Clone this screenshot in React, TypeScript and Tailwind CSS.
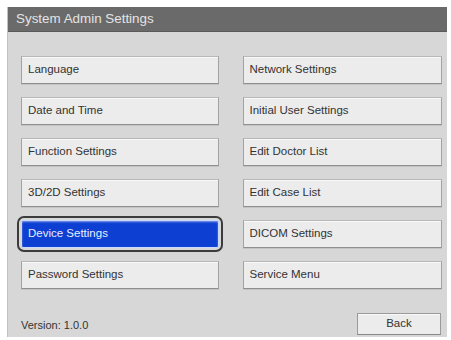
import React from 'react';

const leftItems = ['Language', 'Date and Time', 'Function Settings', '3D/2D Settings', 'Device Settings', 'Password Settings'];
const rightItems = ['Network Settings', 'Initial User Settings', 'Edit Doctor List', 'Edit Case List', 'DICOM Settings', 'Service Menu'];

const MenuButton = ({ label, selected }: { label: string; selected?: boolean }) => {
  if (selected) {
    return (
      <div className="h-[28px] rounded-[3px] outline-2 outline-offset-[2px] outline-[#3c3c3c]">
        <button className="h-full w-full flex items-center pl-[6px] bg-[#0c3fd2] border border-[#c9d8ff] rounded-[2px] text-[11.5px] text-[#e8eeff] shadow-[inset_0_1px_2px_rgba(255,255,255,0.5)]">
          {label}
        </button>
      </div>
    );
  }
  return (
    <button className="h-[28px] w-full flex items-center pl-[6px] bg-[#ececec] border border-[#a3a3a3] border-t-[#b8b8b8] border-b-[#8f8f8f] text-[11.5px] text-[#333] shadow-[inset_0_1px_0_#f8f8f8,0_1px_0_#c4c4c4]">
      {label}
    </button>
  );
};

export default function App() {
  return (
    <div className="w-[451px] h-[340px] bg-white pt-[7px] pl-[7px] font-['Liberation_Sans',Arial,sans-serif]">
      <div className="w-[440px] h-[330px] flex flex-col bg-[#d7d7d7] border-l border-[#c2c2c2]">
        {/* Title bar */}
        <div className="h-[25px] shrink-0 flex items-center pl-[8px] bg-[#6a6a6a] border-b border-[#5a5a5a] text-[13.4px] text-[#e4e4e4]">
          System Admin Settings
        </div>

        <div className="flex-1 flex flex-col pt-[24px] pl-[13px] pr-[5px] pb-[2px]">
          <div className="flex gap-[24px]">
            <div className="w-[198px] flex flex-col gap-[13px]">
              {leftItems.map((item) => (
                <MenuButton key={item} label={item} selected={item === 'Device Settings'} />
              ))}
            </div>
            <div className="w-[200px] flex flex-col gap-[13px]">
              {rightItems.map((item) => (
                <MenuButton key={item} label={item} />
              ))}
            </div>
          </div>

          {/* Footer */}
          <div className="mt-auto flex items-end justify-between">
            <span className="pb-[2px] text-[11px] text-[#333]">Version: 1.0.0</span>
            <button className="mr-[1px] h-[22px] w-[84px] bg-[#ececec] border border-[#9a9a9a] border-b-[#888] text-[11.5px] text-[#333] shadow-[inset_0_1px_0_#f8f8f8]">
              Back
            </button>
          </div>
        </div>
      </div>
    </div>
  );
}
